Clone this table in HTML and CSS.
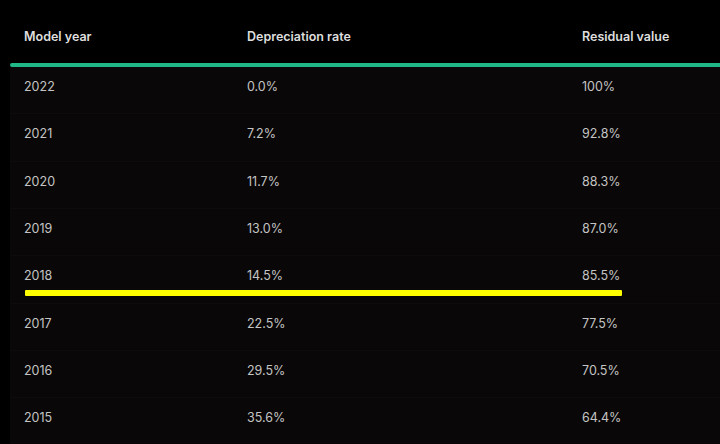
FILE: index.html
```html
<!DOCTYPE html>
<html>
<head>
<meta charset="utf-8">
<link rel="stylesheet" href="styles.css">
</head>
<body>
<div class="page">
  <div class="table">
    <div class="head">
      <div>Model year</div><div>Depreciation rate</div><div>Residual value</div>
    </div>
    <div class="bar"></div>
    <div class="body">
      <div class="row"><div>2022</div><div>0.0%</div><div>100%</div></div>
      <div class="row"><div>2021</div><div>7.2%</div><div>92.8%</div></div>
      <div class="row"><div>2020</div><div>11.7%</div><div>88.3%</div></div>
      <div class="row"><div>2019</div><div>13.0%</div><div>87.0%</div></div>
      <div class="row"><div>2018</div><div>14.5%</div><div>85.5%</div></div>
      <div class="row"><div>2017</div><div>22.5%</div><div>77.5%</div></div>
      <div class="row"><div>2016</div><div>29.5%</div><div>70.5%</div></div>
      <div class="row"><div>2015</div><div>35.6%</div><div>64.4%</div></div>
    </div>
  </div>
  <div class="highlight"></div>
</div>
</body>
</html>
```
FILE: styles.css
```css
html, body {
  margin: 0;
  padding: 0;
  background: #000;
  overflow: hidden;
}
.page {
  position: relative;
  width: 720px;
  height: 444px;
  font-family: Inter, "Noto Sans", sans-serif;
}
.table {
  margin-left: 10px;
}
.head, .row {
  display: grid;
  grid-template-columns: 223px 335px 1fr;
  padding-left: 14px;
}
.head {
  height: 63px;
  align-items: center;
  padding-top: 10px;
  box-sizing: border-box;
  font-size: 12.5px;
  font-weight: 600;
  color: #dedede;
  background: #000;
}
.bar {
  height: 4px;
  background: #1fb886;
  border-radius: 2px 0 0 2px;
}
.body {
  background: #090707;
}
.row {
  height: 47.33px;
  box-sizing: border-box;
  padding-top: 13px;
  line-height: 14px;
  font-size: 12.5px;
  color: #c4c4c4;
  border-bottom: 1px solid #0e0b0b;
}
.highlight {
  position: absolute;
  left: 25px;
  top: 290px;
  width: 597px;
  height: 6px;
  background: #ffff00;
  border-radius: 1px;
}
```
